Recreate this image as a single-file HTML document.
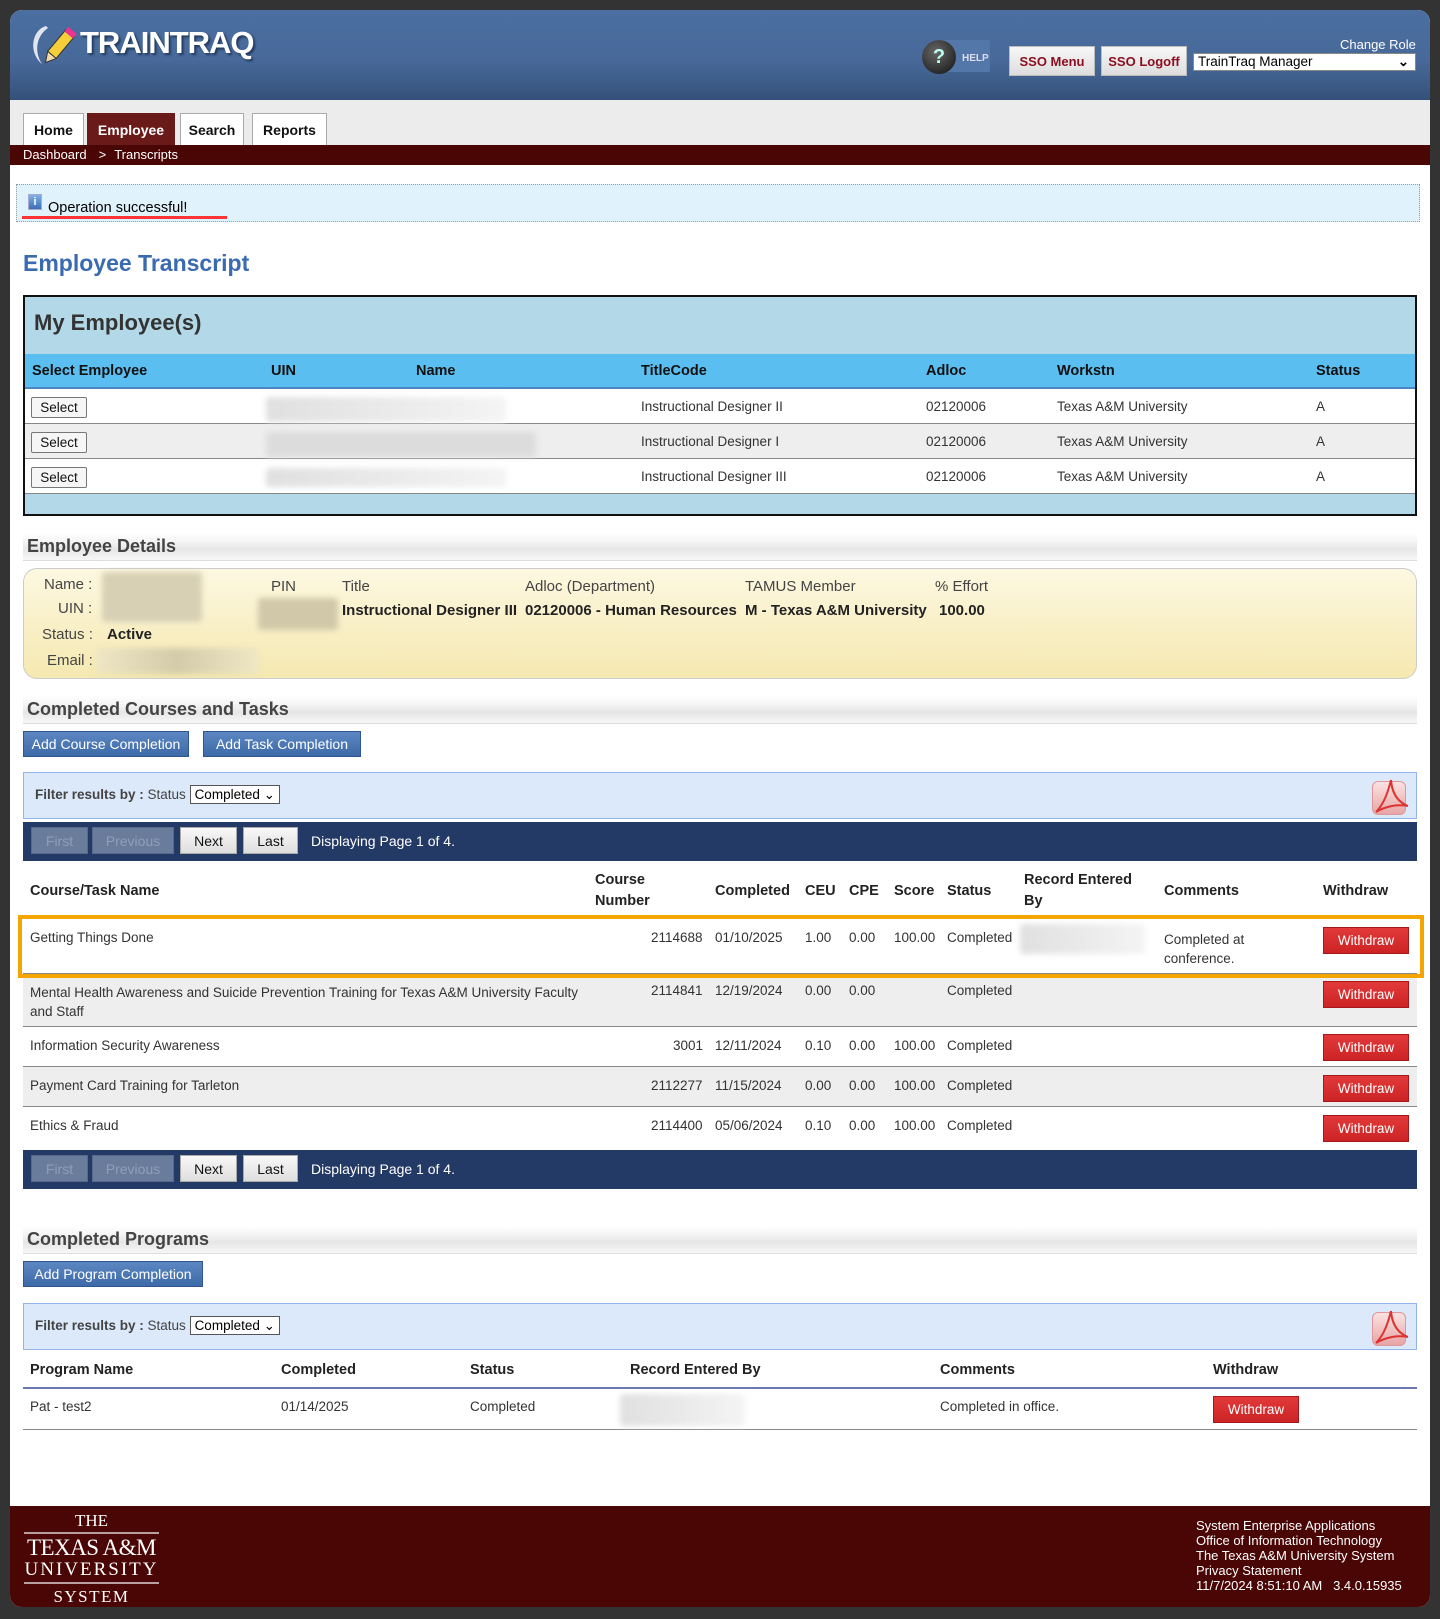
<!DOCTYPE html>
<html><head><meta charset="utf-8">
<style>
*{margin:0;padding:0;box-sizing:border-box}
body{width:1440px;height:1619px;background:#333;font-family:"Liberation Sans",Arial,sans-serif;color:#333;position:relative;overflow:hidden}
.a{position:absolute;white-space:nowrap}
#page{position:absolute;left:10px;top:10px;width:1420px;height:1597px;background:#fff;border-radius:12px;overflow:hidden}
.hdr{position:absolute;left:0;top:0;width:1420px;height:90px;background:linear-gradient(#4a6fa0 0%,#48699a 55%,#3b5a85 85%,#34507a 100%)}
.nav{position:absolute;left:0;top:90px;width:1420px;height:45px;background:#ececec}
.tab{position:absolute;top:103px;height:32px;background:#fff;border:1px solid #aaa;border-bottom:none;font-weight:bold;font-size:14px;color:#111;text-align:center;line-height:32px}
.crumb{position:absolute;left:0;top:135px;width:1420px;height:20px;background:#4a0505;color:#fff;font-size:13px;line-height:20px}
.th{font-weight:bold;font-size:14.5px;color:#222}
.td{font-size:13.5px;color:#333}
.sec{position:absolute;left:13px;width:1394px;height:28px;background:linear-gradient(#fff 0%,#f5f5f5 30%,#e6e6e6 60%,#f7f7f7 100%);border-bottom:1px solid #ddd;font-weight:bold;font-size:18px;color:#444;padding-left:4px;line-height:26px}
.bbtn{position:absolute;height:26px;background:linear-gradient(#5c87c2,#3d6aa8);border:1px solid #2f568e;color:#fff;font-size:14px;line-height:24px;text-align:center}
.filter{position:absolute;left:13px;width:1394px;height:47px;background:#dce9fa;border:1px solid #93b4ee}
.sel{display:inline-block;border:1px solid #555;background:#fff;color:#000;font-size:13.5px;padding:0 4px;height:19px;line-height:17px}
.pager{position:absolute;left:13px;width:1394px;height:39px;background:#243a66}
.pb{position:absolute;top:5px;height:27px;font-size:14px;line-height:27px;text-align:center;background:linear-gradient(#f8f8f8,#dedede);border:1px solid #aaa;color:#111}
.pb.d{background:#6a7c9c;border-color:#59698a;color:#8f9db8}
.wd{position:absolute;width:86px;height:27px;background:linear-gradient(#e23a3a,#cc2424);border:1px solid #a81818;color:#fff;font-size:13.5px;text-align:center;line-height:25px}
.blur{position:absolute;background:linear-gradient(90deg,#e0e0e0,#ececec 60%,#f4f4f4);filter:blur(3px);border-radius:3px}
.pdf{position:absolute;width:34px;height:34px;border-radius:6px;background:linear-gradient(#fbe2e2,#e7a5a5);border:1px solid #d99}
</style></head><body>
<div id="page">
 <div class="hdr"></div>
 <svg class="a" style="left:14px;top:12px" width="60" height="50" viewBox="0 0 60 50">
  <path d="M22 4 C8 8 4 30 18 42 C10 30 12 14 24 6Z" fill="#dfe6ef"/>
  <g transform="rotate(40 36 24)"><rect x="30" y="8" width="11" height="28" fill="#f4cf3a" stroke="#333" stroke-width="1"/><rect x="30" y="4" width="11" height="6" fill="#e9358f"/><path d="M30 36 L35.5 46 L41 36Z" fill="#f1d9a8" stroke="#333"/></g>
 </svg>
 <div class="a" style="left:70px;top:15px;font-size:31px;font-weight:900;color:#fff;letter-spacing:-1px;text-shadow:2px 2px 2px #223a5c">TRAINTRAQ</div>
 <div class="a" style="left:912px;top:30px;width:68px;height:32px;background:#5377a8;border-radius:16px 2px 2px 16px"></div>
 <div class="a" style="left:912px;top:30px;width:34px;height:34px;border-radius:50%;background:radial-gradient(circle at 40% 35%,#666,#111);color:#bfe;font-weight:bold;font-size:20px;text-align:center;line-height:34px">?</div>
 <div class="a" style="left:952px;top:43px;font-size:10px;font-weight:bold;color:#dde">HELP</div>
 <div class="a" style="left:999px;top:36px;width:86px;height:30px;background:linear-gradient(#f7f7f7,#ddd);border:1px solid #bbb;color:#8b0d1f;font-weight:bold;font-size:13px;text-align:center;line-height:30px">SSO Menu</div>
 <div class="a" style="left:1091px;top:36px;width:86px;height:30px;background:linear-gradient(#f7f7f7,#ddd);border:1px solid #bbb;color:#8b0d1f;font-weight:bold;font-size:13px;text-align:center;line-height:30px">SSO Logoff</div>
 <div class="a" style="left:1330px;top:27px;color:#fff;font-size:13px">Change Role</div>
 <div class="a" style="left:1183px;top:43px;width:223px;height:18px;background:#fff;border:1px solid #888;font-size:13.5px;color:#000;line-height:16px;padding-left:4px">TrainTraq Manager<span style="position:absolute;right:6px;font-weight:bold">&#8964;</span></div>

 <div class="nav"></div>
 <div class="tab" style="left:13px;width:61px">Home</div>
 <div class="tab" style="left:77px;width:88px;background:#6b1a1a;color:#fff;border-color:#6b1a1a">Employee</div>
 <div class="tab" style="left:170px;width:64px">Search</div>
 <div class="tab" style="left:242px;width:75px">Reports</div>
 <div class="crumb"><span style="margin-left:13px">Dashboard</span><span style="margin-left:12px">&gt;</span><span style="margin-left:8px">Transcripts</span></div>

 <div class="a" style="left:6px;top:174px;width:1404px;height:38px;background:#e0f2fc;border:1px dotted #999"></div>
 <div class="a" style="left:18px;top:184px;width:14px;height:16px;background:linear-gradient(#7fb0e6,#3b6fb8);border:1px solid #aac;color:#fff;font-size:11px;font-weight:bold;text-align:center;line-height:14px">i</div>
 <div class="a" style="left:38px;top:190px;font-size:14.5px;color:#000">Operation successful!</div>
 <div class="a" style="left:12px;top:206px;width:205px;height:3px;background:#f33"></div>

 <div class="a" style="left:13px;top:240px;font-size:23px;font-weight:bold;color:#3a6ab0">Employee Transcript</div>

 <div class="a" style="left:13px;top:285px;width:1394px;height:221px;border:2px solid #111;background:#b3d9e8"></div>
 <div class="a" style="left:24px;top:300px;font-size:22px;font-weight:bold;color:#333">My Employee(s)</div>
 <div class="a" style="left:15px;top:344px;width:1390px;height:35px;background:#5bbef0;border-bottom:2px solid #4a86c6"></div>
 <div class="a th" style="left:22px;top:353px;color:#111">Select Employee</div>
 <div class="a th" style="left:261px;top:353px;color:#111">UIN</div>
 <div class="a th" style="left:406px;top:353px;color:#111">Name</div>
 <div class="a th" style="left:631px;top:353px;color:#111">TitleCode</div>
 <div class="a th" style="left:916px;top:353px;color:#111">Adloc</div>
 <div class="a th" style="left:1047px;top:353px;color:#111">Workstn</div>
 <div class="a th" style="left:1306px;top:353px;color:#111">Status</div>
 <div class="a" style="left:15px;top:379px;width:1390px;height:35px;background:#fff;border-bottom:1px solid #888"></div>
 <div class="a" style="left:15px;top:414px;width:1390px;height:35px;background:#eee;border-bottom:1px solid #888"></div>
 <div class="a" style="left:15px;top:449px;width:1390px;height:35px;background:#fff;border-bottom:1px solid #888"></div>
 <div class="a" style="left:21px;top:387px;width:56px;height:21px;border:1px solid #777;border-radius:2px;background:#f6f6f6;font-size:13.5px;text-align:center;line-height:19px;color:#111">Select</div>
 <div class="a" style="left:21px;top:422px;width:56px;height:21px;border:1px solid #777;border-radius:2px;background:#f6f6f6;font-size:13.5px;text-align:center;line-height:19px;color:#111">Select</div>
 <div class="a" style="left:21px;top:457px;width:56px;height:21px;border:1px solid #777;border-radius:2px;background:#f6f6f6;font-size:13.5px;text-align:center;line-height:19px;color:#111">Select</div>
 <div class="blur" style="left:256px;top:387px;width:240px;height:25px"></div>
 <div class="blur" style="left:256px;top:422px;width:270px;height:25px;background:#dcdcdc"></div>
 <div class="blur" style="left:256px;top:458px;width:240px;height:19px"></div>
 <div class="a td" style="left:631px;top:389px">Instructional Designer II</div>
 <div class="a td" style="left:916px;top:389px">02120006</div>
 <div class="a td" style="left:1047px;top:389px">Texas A&amp;M University</div>
 <div class="a td" style="left:1306px;top:389px">A</div>
 <div class="a td" style="left:631px;top:424px">Instructional Designer I</div>
 <div class="a td" style="left:916px;top:424px">02120006</div>
 <div class="a td" style="left:1047px;top:424px">Texas A&amp;M University</div>
 <div class="a td" style="left:1306px;top:424px">A</div>
 <div class="a td" style="left:631px;top:459px">Instructional Designer III</div>
 <div class="a td" style="left:916px;top:459px">02120006</div>
 <div class="a td" style="left:1047px;top:459px">Texas A&amp;M University</div>
 <div class="a td" style="left:1306px;top:459px">A</div>

 <div class="sec" style="top:523px">Employee Details</div>
 <div class="a" style="left:13px;top:558px;width:1394px;height:111px;border:1px solid #ccc;border-radius:14px;background:linear-gradient(#fdf8e1,#f5e8b0)"></div>
 <div class="blur" style="left:92px;top:562px;width:100px;height:50px;background:#d8d0b4"></div>
 <div class="blur" style="left:248px;top:588px;width:80px;height:32px;background:#d0c8a8"></div>
 <div class="blur" style="left:86px;top:638px;width:162px;height:26px;background:linear-gradient(90deg,#efe6c4,#d3cba9,#efe6c4)"></div>
 <div class="a" style="left:34px;top:566px;font-size:15px;color:#444">Name :</div>
 <div class="a" style="left:48px;top:590px;font-size:15px;color:#444">UIN :</div>
 <div class="a" style="left:32px;top:616px;font-size:15px;color:#444">Status :</div>
 <div class="a" style="left:97px;top:616px;font-size:15px;color:#222;font-weight:bold">Active</div>
 <div class="a" style="left:37px;top:642px;font-size:15px;color:#444">Email :</div>
 <div class="a" style="left:261px;top:568px;font-size:15px;color:#444">PIN</div>
 <div class="a" style="left:332px;top:568px;font-size:15px;color:#444">Title</div>
 <div class="a" style="left:515px;top:568px;font-size:15px;color:#444">Adloc (Department)</div>
 <div class="a" style="left:735px;top:568px;font-size:15px;color:#444">TAMUS Member</div>
 <div class="a" style="left:925px;top:568px;font-size:15px;color:#444">% Effort</div>
 <div class="a" style="left:332px;top:592px;font-size:15px;color:#222;font-weight:bold">Instructional Designer III</div>
 <div class="a" style="left:515px;top:592px;font-size:15px;color:#222;font-weight:bold">02120006 - Human Resources</div>
 <div class="a" style="left:735px;top:592px;font-size:15px;color:#222;font-weight:bold">M - Texas A&amp;M University</div>
 <div class="a" style="left:929px;top:592px;font-size:15px;color:#222;font-weight:bold">100.00</div>

 <div class="sec" style="top:686px">Completed Courses and Tasks</div>
 <div class="bbtn" style="left:13px;top:721px;width:166px">Add Course Completion</div>
 <div class="bbtn" style="left:193px;top:721px;width:158px">Add Task Completion</div>
 <div class="filter" style="top:762px"></div>
 <div class="a" style="left:25px;top:775px;font-size:13.5px;color:#444"><b>Filter results by :</b> Status <span class="sel">Completed &#8964;</span></div>
 <div class="pdf" style="left:1362px;top:771px"></div>
 <svg class="a" style="left:1362px;top:768px" width="38" height="40"><path d="M19 2 C16 14 12 26 4 34 M19 2 C20 16 26 24 36 28 M4 34 C14 28 26 26 36 28" stroke="#d33" stroke-width="2" fill="none"/></svg>
 <div class="pager" style="top:812px"></div>
 <div class="pb d" style="left:21px;top:817px;width:57px">First</div>
 <div class="pb d" style="left:82px;top:817px;width:82px">Previous</div>
 <div class="pb" style="left:170px;top:817px;width:57px">Next</div>
 <div class="pb" style="left:233px;top:817px;width:55px">Last</div>
 <div class="a" style="left:301px;top:823px;color:#fff;font-size:14px">Displaying Page 1 of 4.</div>

 <div class="a th" style="left:20px;top:873px">Course/Task Name</div>
 <div class="a th" style="left:585px;top:860px;line-height:21px">Course<br>Number</div>
 <div class="a th" style="left:705px;top:873px">Completed</div>
 <div class="a th" style="left:795px;top:873px">CEU</div>
 <div class="a th" style="left:839px;top:873px">CPE</div>
 <div class="a th" style="left:884px;top:873px">Score</div>
 <div class="a th" style="left:937px;top:873px">Status</div>
 <div class="a th" style="left:1014px;top:860px;line-height:21px">Record Entered<br>By</div>
 <div class="a th" style="left:1154px;top:873px">Comments</div>
 <div class="a th" style="left:1313px;top:873px">Withdraw</div>

 <div class="a" style="left:13px;top:907px;width:1394px;height:57px;background:#fff;border-bottom:1px solid #888"></div>
 <div class="a" style="left:13px;top:964px;width:1394px;height:53px;background:#eee;border-bottom:1px solid #888"></div>
 <div class="a" style="left:13px;top:1017px;width:1394px;height:40px;background:#fff;border-bottom:1px solid #888"></div>
 <div class="a" style="left:13px;top:1057px;width:1394px;height:40px;background:#eee;border-bottom:1px solid #888"></div>
 <div class="a" style="left:13px;top:1097px;width:1394px;height:41px;background:#fff"></div>
 <div class="a" style="left:8px;top:905px;width:1406px;height:63px;border:4px solid #f5a500"></div>

 <div class="a td" style="left:20px;top:920px">Getting Things Done</div>
 <div class="a td" style="left:641px;top:920px">2114688</div>
 <div class="a td" style="left:705px;top:920px">01/10/2025</div>
 <div class="a td" style="left:795px;top:920px">1.00</div>
 <div class="a td" style="left:839px;top:920px">0.00</div>
 <div class="a td" style="left:884px;top:920px">100.00</div>
 <div class="a td" style="left:937px;top:920px">Completed</div>
 <div class="blur" style="left:1010px;top:914px;width:125px;height:30px"></div>
 <div class="a td" style="left:1154px;top:920px;line-height:19px;white-space:normal;width:100px">Completed at conference.</div>
 <div class="wd" style="left:1313px;top:917px">Withdraw</div>

 <div class="a td" style="left:20px;top:973px;line-height:19px">Mental Health Awareness and Suicide Prevention Training for Texas A&amp;M University Faculty<br>and Staff</div>
 <div class="a td" style="left:641px;top:973px">2114841</div>
 <div class="a td" style="left:705px;top:973px">12/19/2024</div>
 <div class="a td" style="left:795px;top:973px">0.00</div>
 <div class="a td" style="left:839px;top:973px">0.00</div>
 <div class="a td" style="left:937px;top:973px">Completed</div>
 <div class="wd" style="left:1313px;top:971px">Withdraw</div>

 <div class="a td" style="left:20px;top:1028px">Information Security Awareness</div>
 <div class="a td" style="left:663px;top:1028px">3001</div>
 <div class="a td" style="left:705px;top:1028px">12/11/2024</div>
 <div class="a td" style="left:795px;top:1028px">0.10</div>
 <div class="a td" style="left:839px;top:1028px">0.00</div>
 <div class="a td" style="left:884px;top:1028px">100.00</div>
 <div class="a td" style="left:937px;top:1028px">Completed</div>
 <div class="wd" style="left:1313px;top:1024px">Withdraw</div>

 <div class="a td" style="left:20px;top:1068px">Payment Card Training for Tarleton</div>
 <div class="a td" style="left:641px;top:1068px">2112277</div>
 <div class="a td" style="left:705px;top:1068px">11/15/2024</div>
 <div class="a td" style="left:795px;top:1068px">0.00</div>
 <div class="a td" style="left:839px;top:1068px">0.00</div>
 <div class="a td" style="left:884px;top:1068px">100.00</div>
 <div class="a td" style="left:937px;top:1068px">Completed</div>
 <div class="wd" style="left:1313px;top:1065px">Withdraw</div>

 <div class="a td" style="left:20px;top:1108px">Ethics &amp; Fraud</div>
 <div class="a td" style="left:641px;top:1108px">2114400</div>
 <div class="a td" style="left:705px;top:1108px">05/06/2024</div>
 <div class="a td" style="left:795px;top:1108px">0.10</div>
 <div class="a td" style="left:839px;top:1108px">0.00</div>
 <div class="a td" style="left:884px;top:1108px">100.00</div>
 <div class="a td" style="left:937px;top:1108px">Completed</div>
 <div class="wd" style="left:1313px;top:1105px">Withdraw</div>

 <div class="pager" style="top:1140px"></div>
 <div class="pb d" style="left:21px;top:1145px;width:57px">First</div>
 <div class="pb d" style="left:82px;top:1145px;width:82px">Previous</div>
 <div class="pb" style="left:170px;top:1145px;width:57px">Next</div>
 <div class="pb" style="left:233px;top:1145px;width:55px">Last</div>
 <div class="a" style="left:301px;top:1151px;color:#fff;font-size:14px">Displaying Page 1 of 4.</div>

 <div class="sec" style="top:1216px">Completed Programs</div>
 <div class="bbtn" style="left:13px;top:1251px;width:180px">Add Program Completion</div>
 <div class="filter" style="top:1293px"></div>
 <div class="a" style="left:25px;top:1306px;font-size:13.5px;color:#444"><b>Filter results by :</b> Status <span class="sel">Completed &#8964;</span></div>
 <div class="pdf" style="left:1362px;top:1302px"></div>
 <svg class="a" style="left:1362px;top:1299px" width="38" height="40"><path d="M19 2 C16 14 12 26 4 34 M19 2 C20 16 26 24 36 28 M4 34 C14 28 26 26 36 28" stroke="#d33" stroke-width="2" fill="none"/></svg>
 <div class="a" style="left:13px;top:1341px;width:1394px;height:38px;border-bottom:2px solid #6a7ab0"></div>
 <div class="a th" style="left:20px;top:1352px">Program Name</div>
 <div class="a th" style="left:271px;top:1352px">Completed</div>
 <div class="a th" style="left:460px;top:1352px">Status</div>
 <div class="a th" style="left:620px;top:1352px">Record Entered By</div>
 <div class="a th" style="left:930px;top:1352px">Comments</div>
 <div class="a th" style="left:1203px;top:1352px">Withdraw</div>
 <div class="a" style="left:13px;top:1379px;width:1394px;height:41px;border-bottom:1px solid #888"></div>
 <div class="a td" style="left:20px;top:1389px">Pat - test2</div>
 <div class="a td" style="left:271px;top:1389px">01/14/2025</div>
 <div class="a td" style="left:460px;top:1389px">Completed</div>
 <div class="blur" style="left:610px;top:1384px;width:125px;height:32px"></div>
 <div class="a td" style="left:930px;top:1389px">Completed in office.</div>
 <div class="wd" style="left:1203px;top:1386px">Withdraw</div>

 <div class="a" style="left:0;top:1496px;width:1420px;height:101px;background:#4a0505"></div>
 <div class="a" style="left:14px;top:1502px;width:135px;text-align:center;color:#fff;font-family:'Liberation Serif',serif;line-height:1">
  <div style="font-size:17px">THE</div>
  <div style="height:2px;background:#b9a0a0;margin:3px 0 2px"></div>
  <div style="font-size:23px;letter-spacing:-0.5px">TEXAS A&amp;M</div>
  <div style="font-size:19px;letter-spacing:2px;margin-top:1px">UNIVERSITY</div>
  <div style="height:2px;background:#b9a0a0;margin:3px 0 4px"></div>
  <div style="font-size:17px;letter-spacing:1.5px">SYSTEM</div>
 </div>
 <div class="a" style="left:1186px;top:1508px;color:#fff;font-size:13px;line-height:15px">System Enterprise Applications<br>Office of Information Technology<br>The Texas A&amp;M University System<br>Privacy Statement<br>11/7/2024 8:51:10 AM&nbsp;&nbsp; 3.4.0.15935</div>
</div>
</body></html>
